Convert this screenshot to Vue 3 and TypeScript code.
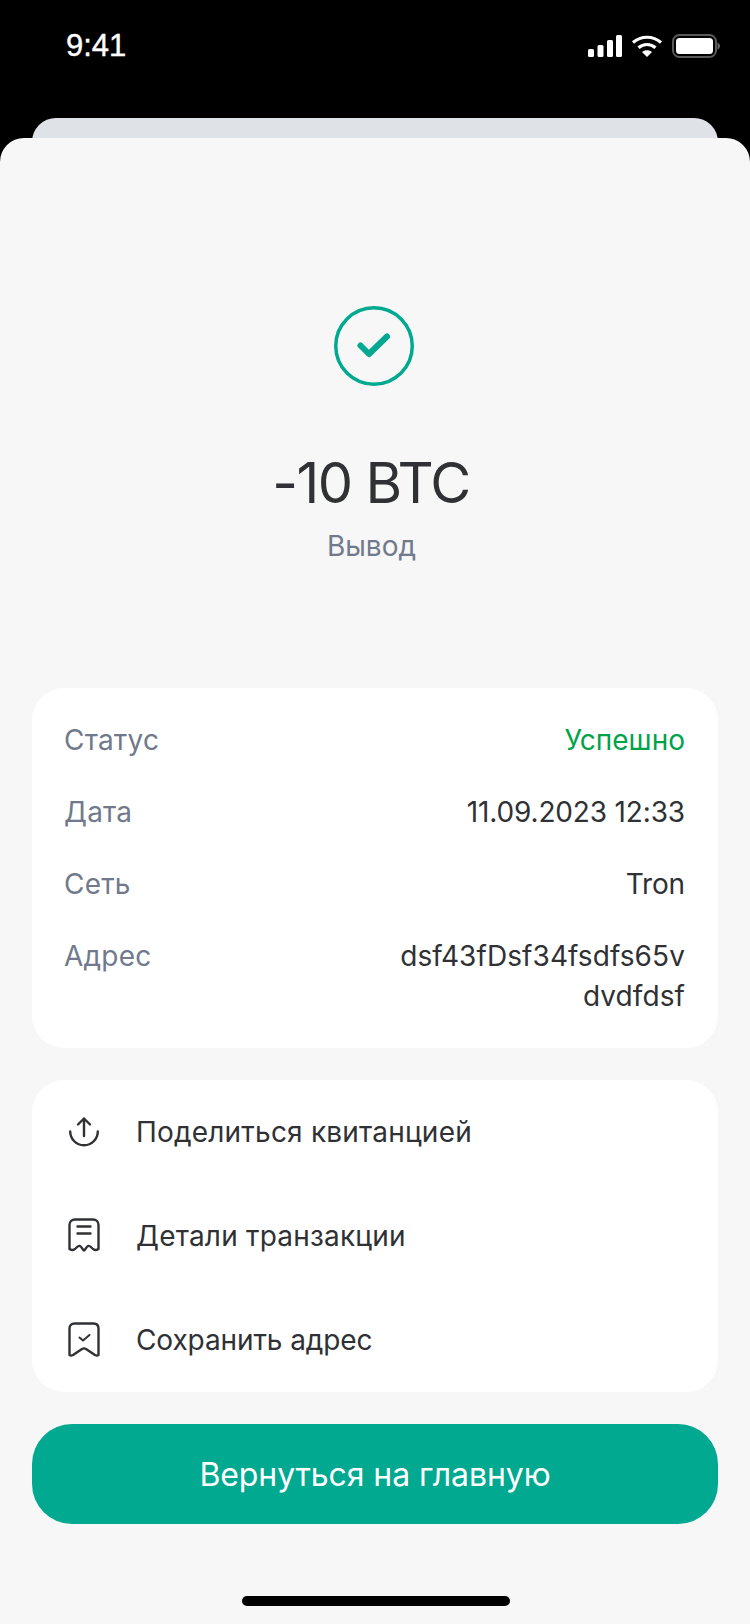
<script setup lang="ts">
interface Row { label: string; value: string; tone?: string }
const rows: Row[] = [
  { label: 'Статус', value: 'Успешно', tone: 'ok' },
  { label: 'Дата', value: '11.09.2023 12:33' },
  { label: 'Сеть', value: 'Tron' },
  { label: 'Адрес', value: 'dsf43fDsf34fsdfs65v dvdfdsf', tone: 'addr' },
]
</script>

<template>
  <div class="screen">
    <header class="status">
      <span class="time">9:41</span>
      <div class="status-icons">
        <svg width="34" height="22" viewBox="0 0 34 22" fill="#fff">
          <rect x="0" y="14" width="6" height="8" rx="1.5" />
          <rect x="9.500" y="10" width="6" height="12" rx="1.5" />
          <rect x="19" y="5" width="6" height="17" rx="1.5" />
          <rect x="28" y="0" width="6" height="22" rx="1.5" />
        </svg>
        <svg width="32" height="22" viewBox="0 0 32 22" fill="none" stroke="#fff" stroke-width="3.200">
          <path d="M2 7.500C10 .5 22 .5 30 7.500" />
          <path d="M7.500 12.800C12.500 8.400 19.500 8.400 24.500 12.800" />
          <path d="M16 22l-5-5c2.800-2.400 7.200-2.400 10 0z" fill="#fff" stroke="none" />
        </svg>
        <svg width="48" height="24" viewBox="0 0 48 24" fill="none">
          <rect x="1" y="1" width="43" height="22" rx="6.500" stroke="#fff" stroke-opacity=".35" stroke-width="2" />
          <rect x="4" y="4" width="37" height="16" rx="3.500" fill="#fff" />
          <path d="M45.500 8.500v7c1.400-.5 2.500-2 2.500-3.500s-1.100-3-2.500-3.500z" fill="#fff" fill-opacity=".4" />
        </svg>
      </div>
    </header>

    <div class="back-card"></div>

    <main class="sheet">
      <section class="hero">
        <svg class="check" width="80" height="80" viewBox="0 0 80 80" fill="none" stroke="#00a98f">
          <circle cx="40" cy="40" r="38.250" stroke-width="3.500" />
          <path d="M26.500 39.500L35 48L53 30.500" stroke-width="6" stroke-linecap="round" stroke-linejoin="round" />
        </svg>
        <div class="amount">-10 BTC</div>
        <div class="kind">Вывод</div>
      </section>

      <section class="card details">
        <div v-for="row in rows" :key="row.label" class="row">
          <span class="label">{{ row.label }}</span>
          <span class="value" :class="row.tone">{{ row.value }}</span>
        </div>
      </section>

      <section class="card actions">
        <div class="action">
          <svg width="32" height="32" viewBox="0 0 32 32" fill="none" stroke="#2f3134" stroke-width="2.400" stroke-linecap="round" stroke-linejoin="round">
            <path d="M2.200 15.500A13.800 13.800 0 0 0 29.800 15.500" />
            <path d="M16 20V2.500M10 8.500l6-6 6 6" />
          </svg>
          <span>Поделиться квитанцией</span>
        </div>
        <div class="action">
          <svg width="32" height="36" viewBox="0 0 32 36" fill="none" stroke="#2f3134" stroke-width="2.400" stroke-linecap="round" stroke-linejoin="round">
            <path d="M1.500 31V7c0-3.300 2.200-5.500 5.500-5.500h18c3.300 0 5.500 2.200 5.500 5.500v24c-2.500 1.600-4 1.600-6-.5-2-2.200-3.200-3-4.500-2.500-2 1-3 4.500-4 4.500s-2-3.500-4-4.500c-1.300-.5-2.500.3-4.500 2.500-2 2.100-3.500 2.100-6 .5z" />
            <path d="M9.500 8.500h13M9.500 15.500h13" />
          </svg>
          <span>Детали транзакции</span>
        </div>
        <div class="action tight">
          <svg width="32" height="36" viewBox="0 0 32 36" fill="none" stroke="#2f3134" stroke-width="2.400" stroke-linecap="round" stroke-linejoin="round">
            <path d="M1.500 33V6.500c0-3 2-5 5-5h19c3 0 5 2 5 5V33c-.8.800-2 .8-3.500 0l-9-6c-1.300-.8-2.700-.8-4 0l-9 6c-1.500.8-2.700.8-3.500 0z" />
            <path d="M11.500 15.500l3.500 3L21.500 13" stroke-width="2" />
          </svg>
          <span>Сохранить адрес</span>
        </div>
      </section>

      <button class="primary">Вернуться на главную</button>
      <div class="home"></div>
    </main>
  </div>
</template>

<style>
html, body { margin: 0; background: #000; }
</style>

<style scoped>
.screen {
  position: relative;
  width: 750px;
  height: 1624px;
  background: #000;
  overflow: hidden;
  font-family: Inter, "Noto Sans", sans-serif;
  display: flex;
  flex-direction: column;
}
.status {
  height: 118px;
  box-sizing: border-box;
  padding: 26px 30px 0 66px;
  display: flex;
  justify-content: space-between;
  align-items: flex-start;
}
.time {
  color: #fff;
  font-family: "Liberation Sans", sans-serif;
  font-size: 31px;
  line-height: 40px;
  font-weight: 400;
  -webkit-text-stroke: .4px #fff;
}
.status-icons {
  display: flex;
  align-items: center;
  gap: 9px;
  padding-top: 8px;
}
.back-card {
  height: 40px;
  margin: 0 32px -20px;
  background: #dfe2e6;
  border-radius: 24px 24px 0 0;
}
.sheet {
  position: relative;
  flex: 1;
  background: #f7f7f7;
  border-radius: 24px 24px 0 0;
  padding: 0 32px;
  display: flex;
  flex-direction: column;
}
.hero {
  display: flex;
  flex-direction: column;
  align-items: center;
  padding-top: 168px;
  height: 550px;
  box-sizing: border-box;
}
.check { margin-right: 2px; }
.amount {
  margin-top: 61px;
  margin-right: 8px;
  font-size: 56px;
  line-height: 72px;
  color: #2f3134;
  letter-spacing: -1.600px;
}
.kind {
  margin-top: 7px;
  margin-right: 7px;
  font-size: 28px;
  line-height: 40px;
  color: #717a8c;
}
.card {
  background: #fff;
  border-radius: 32px;
}
.details {
  height: 360px;
  box-sizing: border-box;
  padding: 32px 33px 32px 32px;
  display: flex;
  flex-direction: column;
  gap: 32px;
}
.row {
  display: flex;
  justify-content: space-between;
  font-size: 28px;
  line-height: 40px;
}
.label { color: #717a8c; letter-spacing: .2px; }
.value {
  color: #2f3134;
  width: 300px;
  text-align: right;
  overflow-wrap: break-word;
  letter-spacing: -.15px;
}
.value.ok { color: #00a34a; letter-spacing: 0; }
.value.addr { letter-spacing: .08px; }
.actions {
  margin-top: 32px;
  height: 312px;
  display: flex;
  flex-direction: column;
}
.action {
  flex: 1;
  display: flex;
  align-items: center;
  gap: 36px;
  padding-left: 36px;
  font-size: 28px;
  color: #2f3134;
  letter-spacing: .2px;
}
.action.tight { letter-spacing: -.1px; }
.action svg { flex: none; }
.primary {
  margin-top: 32px;
  height: 100px;
  border: 0;
  border-radius: 40px;
  background: #00a98f;
  color: #fff;
  font-family: inherit;
  font-size: 32px;
  letter-spacing: -.1px;
}
.home {
  position: absolute;
  left: 242px;
  bottom: 18px;
  width: 268px;
  height: 10px;
  border-radius: 5px;
  background: #000;
}
</style>
